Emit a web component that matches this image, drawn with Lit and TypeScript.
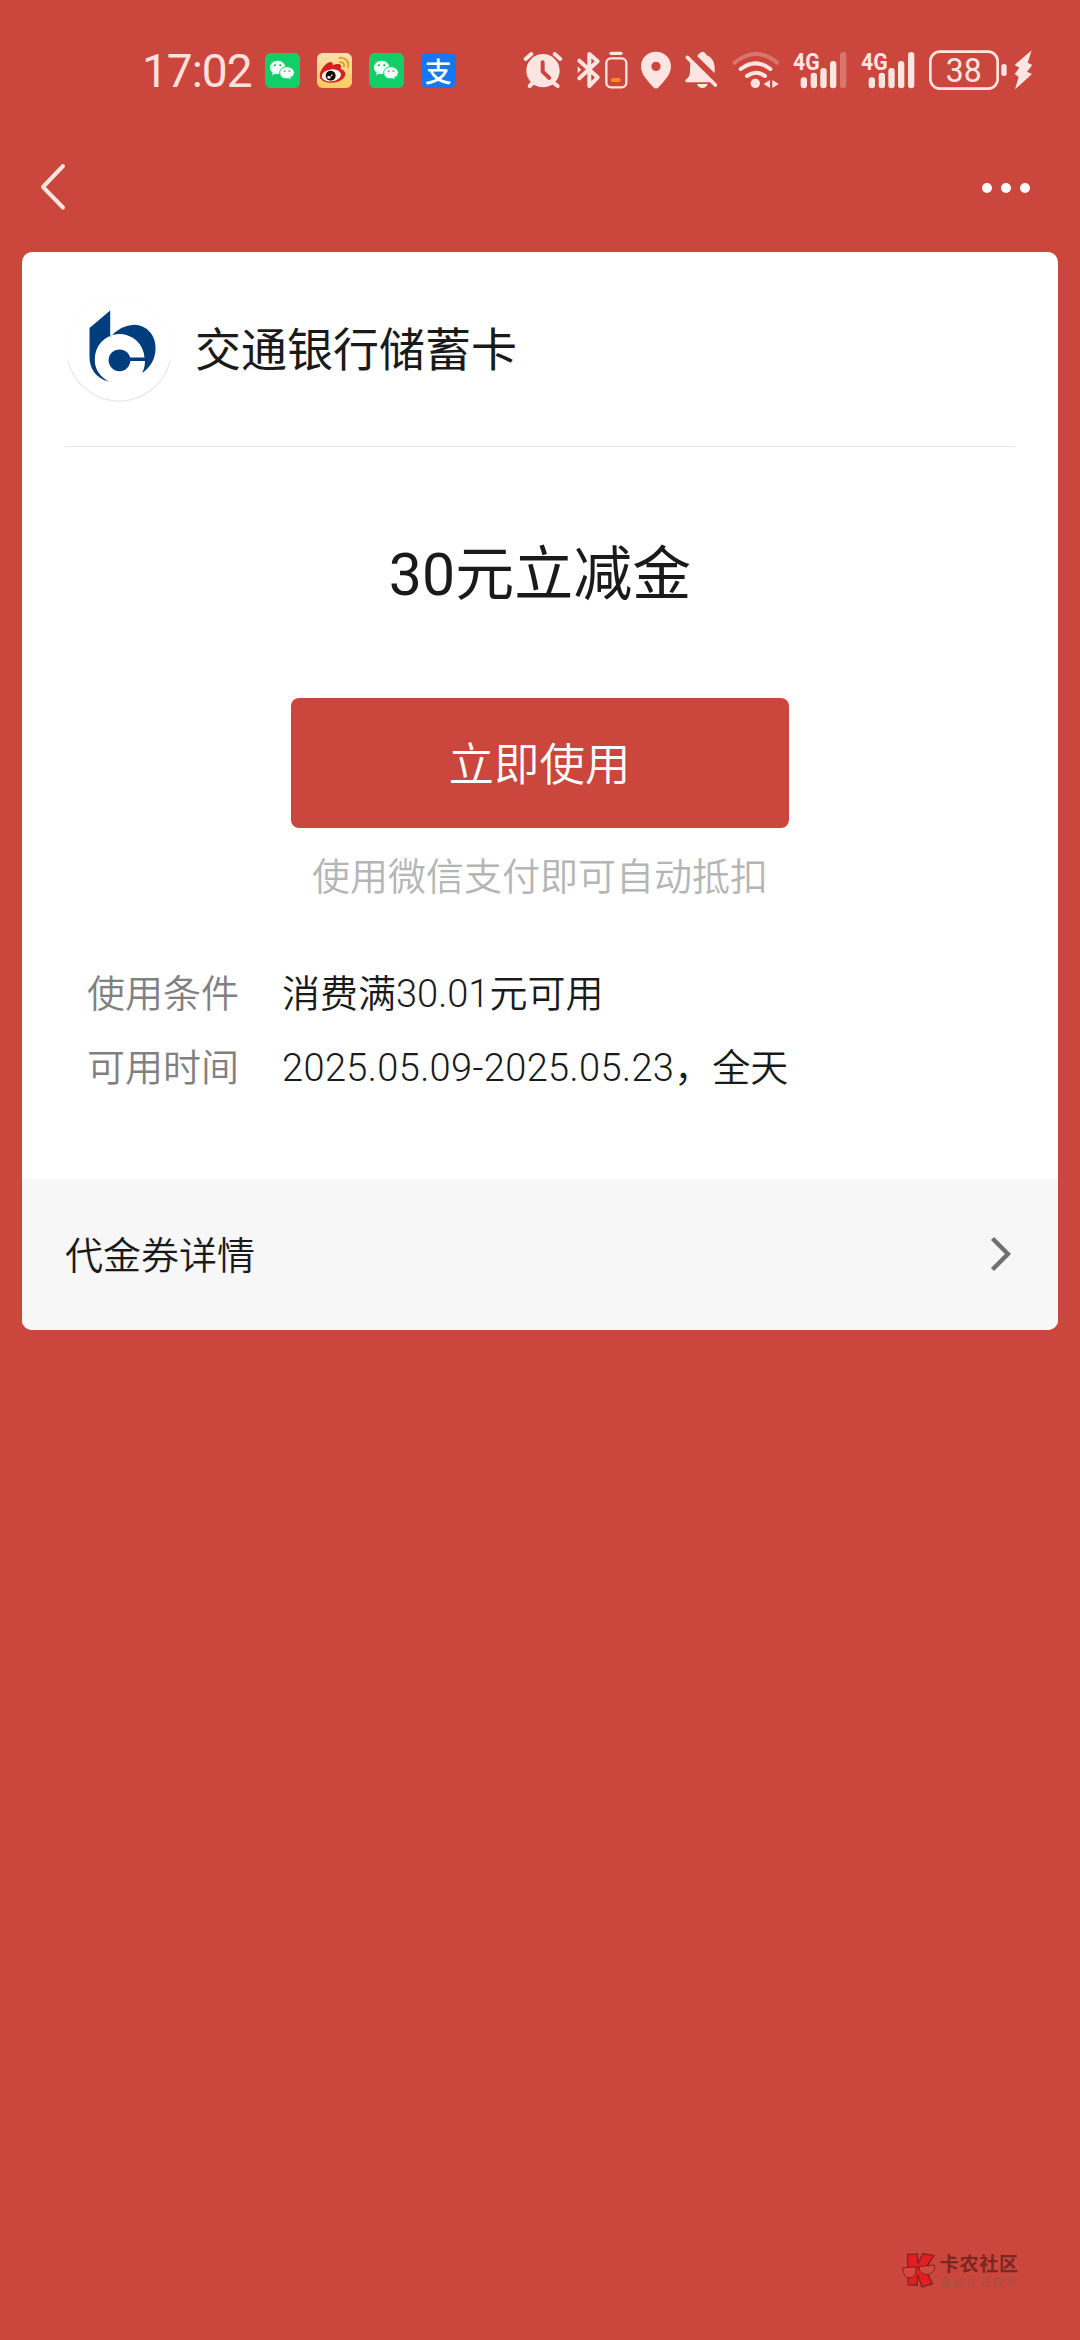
import { LitElement, html, css, svg } from "lit";
import { customElement } from "lit/decorators.js";

const wechat = html`<svg class="app" viewBox="0 0 105 105">
  <rect width="105" height="105" rx="17" fill="#12ce66" />
  <path d="M38 23c-13 0-23 9-23 20 0 7 3 12 8 16l-2 8 9-5c16 4 31-4 31-19 0-11-10-20-23-20z" fill="#f4fff8" />
  <path d="M66 41c-12 0-22 8-22 18 0 13 12 21 27 18l8 4-2-7c7-4 11-9 11-15 0-10-10-18-22-18z" fill="#f4fff8" stroke="#12ce66" stroke-width="3" />
  <g fill="#16a657"><circle cx="30" cy="37" r="3" /><circle cx="46" cy="37" r="3" /><circle cx="59" cy="54" r="2.6" /><circle cx="73" cy="54" r="2.6" /></g>
</svg>`;

const weibo = html`<svg class="app" viewBox="0 0 105 105">
  <defs><linearGradient id="wb" x1="0" y1="0" x2="0" y2="1"><stop offset="0" stop-color="#fde2b0" /><stop offset="1" stop-color="#fdcb5c" /></linearGradient></defs>
  <rect width="105" height="105" rx="17" fill="url(#wb)" />
  <path d="M8 68C8 52 27 28 40 27c7 0 8 5 7 10 10-5 24-6 25 1 1 4-1 7-1 10 8 2 14 7 14 15 0 14-19 26-41 26C23 89 8 81 8 68z" fill="#d4201f" />
  <ellipse cx="43" cy="67" rx="29" ry="18" fill="#fffaf5" transform="rotate(-7 43 67)" />
  <circle cx="41" cy="68" r="15" fill="#170b0a" />
  <ellipse cx="36" cy="73" rx="5" ry="4" fill="#fff" /><circle cx="44" cy="67" r="2.5" fill="#fff" />
  <g fill="none" stroke="#e0a12e" stroke-width="6" stroke-linecap="round"><path d="M67 15c16-4 31 11 26 28" /><path d="M69 28c8-2 14 5 12 12" /></g>
</svg>`;

const tile = (x: number, w: number, body: unknown) =>
  html`<svg class="tile" viewBox="${x} 27 ${w} 135" width=${w / 3} height="45">${body}</svg>`;

const bars = (x: number, last: number) => svg`
  ${[[0, 33], [30, 47], [59, 61], [88, 82], [118, 109]].map(
    ([dx, h], i) => svg`<rect x=${x + dx} y=${157 - h} width="19" height=${h} rx="9" opacity=${i === 4 ? last : 1} />`,
  )}`;

@customElement("status-bar")
class StatusBar extends LitElement {
  static styles = css`
    :host { display: flex; align-items: center; height: 140px; box-sizing: border-box; padding-left: 142px; }
    .time { width: 122.7px; font: 400 46px/46px Roboto, sans-serif; letter-spacing: -1px; color: #ffe0dc; white-space: nowrap; margin-top: 1px; }
    .apps { display: flex; gap: 17px; width: 258.6px; }
    .app { display: block; width: 35px; height: 35px; }
    .pay { display: flex; align-items: center; justify-content: center; width: 35px; height: 35px; border-radius: 6px; background: #1677f2; color: #fff; font: 500 27px/35px "Noto Sans CJK SC", sans-serif; }
    .system { display: flex; fill: #ffe5e1; margin-top: -6px; }
    .tile { display: block; flex: none; overflow: visible; }
    .gen { font: 700 73px Roboto, sans-serif; }
    .level { font: 400 100px Roboto, sans-serif; }
  `;
  render() {
    return html`
      <div class="time">17:02</div>
      <div class="apps">${wechat}${weibo}${wechat}<div class="pay">支</div></div>
      <div class="system">
        ${tile(40, 140, svg`
          <circle cx="100" cy="104" r="50" />
          <path d="M48 69L65 54M135 54L152 69M72 138L60 150M128 138L144 150" stroke="#ffe5e1" stroke-width="12" stroke-linecap="round" />
          <path d="M99 79V107L119 126" stroke="#cb463c" stroke-width="12" fill="none" stroke-linecap="round" stroke-linejoin="round" />`)}
        ${tile(180, 98, svg`
          <path d="M208 74L263 124L238 150V54L263 76L208 127" fill="none" stroke="#ffe5e1" stroke-width="12" stroke-linecap="round" stroke-linejoin="round" />
          <path d="M203 91L214 101L203 111Z" />`)}
        ${tile(278, 94, svg`
          <rect x="297" y="47" width="40" height="10" rx="5" />
          <rect x="288" y="67" width="60" height="87" rx="14" fill="none" stroke="#ffe5e1" stroke-width="7" />
          <rect x="302" y="126" width="29" height="12" rx="5" fill="#ff8a24" />`)}
        ${tile(372, 132, svg`
          <path fill-rule="evenodd" d="M438 47C413 47 393 66 393 91C393 119 418 139 430 154Q438 161 446 154C458 139 483 119 483 91C483 66 463 47 438 47ZM438 77A14 14 0 1 1 438 105A14 14 0 1 1 438 77Z" />`)}
        ${tile(504, 141, svg`
          <path d="M577 47C584 47 587 51 589 57C606 63 614 78 614 96V112L561 60C564 58 566 51 577 47Z" />
          <path d="M541 75L602 136L597 139H531Q524 138 527 131C536 126 540 119 540 106Z" />
          <path d="M532 64L616 147" stroke="#ffe5e1" stroke-width="11" stroke-linecap="round" />
          <path d="M561 144H593Q589 156 577 156Q565 156 561 144Z" />`)}
        ${tile(645, 165, svg`
          <g fill="none" stroke="#ffe5e1" stroke-width="12" stroke-linecap="round">
            <path d="M674 80Q738 28 801 80" opacity=".3" />
            <path d="M692 99Q738 65 781 99" />
            <path d="M711 120Q738 101 765 120" />
          </g>
          <circle cx="736" cy="142" r="14" />
          <path d="M780 132V156L761 144ZM787 132V156L806 144Z" />`)}
        ${tile(810, 214, svg`
          <text class="gen" x="849" y="102" textLength="80" lengthAdjust="spacingAndGlyphs">4G</text>${bars(872, 0.3)}`)}
        ${tile(1024, 222, svg`
          <text class="gen" x="1054" y="102" textLength="80" lengthAdjust="spacingAndGlyphs">4G</text>${bars(1077, 1)}`)}
        ${tile(1246, 254, svg`
          <rect x="1262" y="47" width="202" height="111" rx="29" fill="none" stroke="#ffe5e1" stroke-width="8" />
          <text class="level" x="1308" y="138" textLength="108" lengthAdjust="spacingAndGlyphs">38</text>
          <rect x="1475" y="84" width="16" height="36" rx="7" />`)}
        ${tile(1500, 75, svg`
          <path d="M1565 43L1514 87L1528 95L1514 114L1526 123L1515 160L1566 114L1551 107L1567 87L1553 80Z" />`)}
      </div>
    `;
  }
}

@customElement("coupon-card")
class CouponCard extends LitElement {
  static styles = css`
    :host { display: block; margin: 0 22px; border-radius: 10px; overflow: hidden; background: #fff; color: #1a1a1a; font-family: Roboto, "Noto Sans CJK SC", sans-serif; }
    .body { height: 927px; box-sizing: border-box; padding: 0 43px; display: flex; flex-direction: column; align-items: center; }
    .bank { align-self: stretch; display: flex; align-items: center; height: 195px; box-sizing: border-box; border-bottom: 1.5px solid #e6e6e6; }
    .logo { display: block; width: 108px; height: 108px; flex: none; }
    .name { margin: 2px 0 0 22px; font-size: 46px; line-height: 60px; }
    .title { margin-top: 88px; font-size: 59px; line-height: 80px; white-space: nowrap; }
    .use { margin-top: 83px; width: 498px; height: 130px; border: 0; padding: 0 1px 4px 0; border-radius: 8px; background: #cb463c; color: #fff; font-family: inherit; font-weight: 350; font-size: 45.5px; }
    .hint { margin-top: 24px; font-size: 38px; font-weight: 350; line-height: 50px; color: #b5b5b5; }
    .terms { align-self: stretch; display: grid; grid-template-columns: 195px 1fr; row-gap: 24px; margin: 67px 0 0; padding-left: 22px; font-size: 38px; line-height: 50px; white-space: nowrap; font-weight: 350; }
    .key { color: #808080; }
    .value { margin: 0; }
    .dates { letter-spacing: 0.37px; }
    .more { display: flex; align-items: center; justify-content: space-between; height: 151px; box-sizing: border-box; padding: 0 47px 4px 43px; background: #f7f7f7; font-size: 38px; font-weight: 350; }
    .chevron { display: block; width: 22px; height: 40px; margin-top: 2px; }
  `;
  render() {
    return html`
      <div class="body">
        <div class="bank">
          <svg class="logo" viewBox="65 296 108 108">
            <circle cx="119" cy="350" r="52.5" fill="#fff" stroke="#fbfbfb" />
            <path d="M68 362A52.5 52.5 0 0 0 170 362" fill="none" stroke="#e8e8e8" stroke-width="1.2" />
            <path d="M110.2 311.5V338Q121 326 134 325.7C147 326 155.6 336 155.6 349C155.6 360 150 369 142 374Q145 369 145 361.7V358.5H144.4A24.8 24.8 0 0 0 94.8 361.3Q95 375 109 382.8C96 379 89.5 370 89.5 358V329Z" fill="#003d7c" />
            <circle cx="119.5" cy="361.3" r="10.9" fill="#003d7c" />
            <path d="M119 358.5H146V361.9H119Z" fill="#003d7c" />
          </svg>
          <div class="name">交通银行储蓄卡</div>
        </div>
        <div class="title">30元立减金</div>
        <button class="use">立即使用</button>
        <div class="hint">使用微信支付即可自动抵扣</div>
        <dl class="terms">
          <dt class="key">使用条件</dt><dd class="value">消费满30.01元可用</dd>
          <dt class="key">可用时间</dt><dd class="value"><span class="dates">2025.05.09-2025.05.23</span>，全天</dd>
        </dl>
      </div>
      <div class="more">
        <span>代金券详情</span>
        <svg class="chevron" viewBox="0 0 22 40"><path d="M3.5 4.5L19 20L3.5 35.5" fill="none" stroke="#707070" stroke-width="4.4" /></svg>
      </div>
    `;
  }
}

@customElement("app-root")
class AppRoot extends LitElement {
  static styles = css`
    :host { display: flex; flex-direction: column; width: 1080px; height: 2340px; background: #cb463c; overflow: hidden; }
    .nav { display: flex; align-items: center; justify-content: space-between; height: 95px; margin-bottom: 17px; padding: 0 50px 0 38px; }
    .back { display: block; width: 30px; height: 50px; }
    .dots { display: flex; gap: 9.2px; }
    .dot { width: 10px; height: 10px; border-radius: 50%; background: #fff; }
    .mark { display: flex; align-items: center; gap: 4px; margin: auto 61px 51px auto; font-family: "Liberation Sans", "Noto Sans CJK SC", sans-serif; white-space: nowrap; }
    .glasses { display: block; width: 34px; height: 37px; }
    .site { color: #792722; font-weight: 700; font-size: 19px; letter-spacing: 0.7px; line-height: 23px; }
    .slogan { color: #ab4d45; font-size: 10.5px; letter-spacing: 2.7px; line-height: 13px; }
  `;
  render() {
    return html`
      <status-bar></status-bar>
      <div class="nav">
        <svg class="back" viewBox="0 0 30 50"><path d="M25 3L5 24L25 44.5" fill="none" stroke="#ffe3df" stroke-width="4" stroke-linecap="round" stroke-linejoin="round" /></svg>
        <div class="dots"><div class="dot"></div><div class="dot"></div><div class="dot"></div></div>
      </div>
      <coupon-card></coupon-card>
      <div class="mark">
        <svg class="glasses" viewBox="60 66 104 110">
          <path d="M77 71H108V100L124 70L158 75L131 116L153 162L121 171L108 134L106 166L79 165Z" fill="#e41d21" stroke="#7d2420" stroke-width="4" />
          <path d="M62 113L103 110C105 133 96 143 84 143C70 143 63 130 62 113ZM112 109L160 104C162 120 152 133 137 133C122 133 112 124 112 109Z" fill="#d5483f" stroke="#7d2420" stroke-width="3" />
          <path d="M102 113H113" stroke="#7d2420" stroke-width="4" />
        </svg>
        <div>
          <div class="site">卡农社区</div>
          <div class="slogan">金融在线教育</div>
        </div>
      </div>
    `;
  }
}
